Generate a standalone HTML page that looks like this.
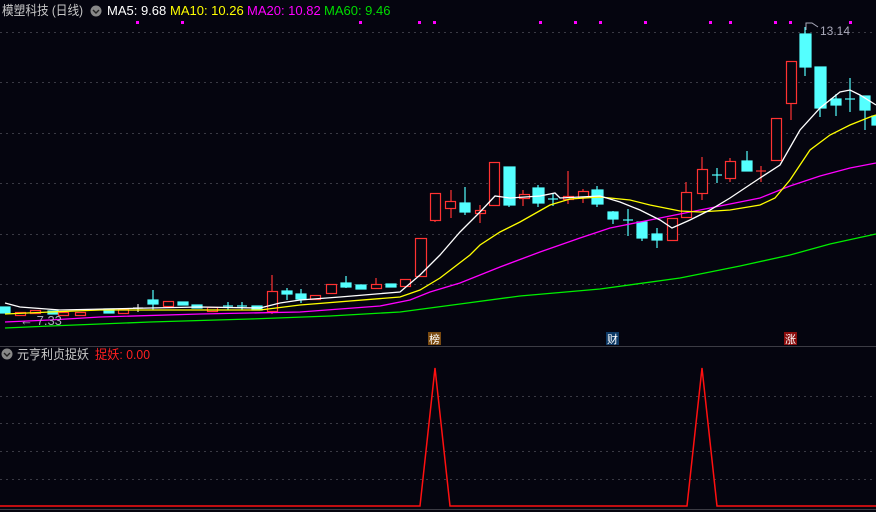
<!DOCTYPE html>
<html><head><meta charset="utf-8"><style>
html,body{margin:0;padding:0;background:#05050f;}
svg{display:block}
text{font-family:"Liberation Sans","Noto Sans CJK SC",sans-serif;}
</style></head><body>
<svg width="876" height="512" viewBox="0 0 876 512" xmlns="http://www.w3.org/2000/svg">
<rect width="876" height="512" fill="#05050f"/>
<g stroke="#3a3a44" stroke-width="1" stroke-dasharray="2,4">
<line x1="0" y1="32.5" x2="876" y2="32.5"/><line x1="0" y1="82.5" x2="876" y2="82.5"/>
<line x1="0" y1="133.5" x2="876" y2="133.5"/><line x1="0" y1="183.5" x2="876" y2="183.5"/>
<line x1="0" y1="234.5" x2="876" y2="234.5"/><line x1="0" y1="284.5" x2="876" y2="284.5"/>
<line x1="0" y1="396.5" x2="876" y2="396.5"/><line x1="0" y1="423.5" x2="876" y2="423.5"/>
<line x1="0" y1="451.5" x2="876" y2="451.5"/><line x1="0" y1="479.5" x2="876" y2="479.5"/>
</g>
<line x1="0" y1="346.5" x2="876" y2="346.5" stroke="#3c3c44"/>
<line x1="0" y1="509.5" x2="876" y2="509.5" stroke="#3c3c44"/>
<g fill="#ff00ff">
<rect x="136" y="21" width="3" height="3"/><rect x="181" y="21" width="3" height="3"/><rect x="359" y="21" width="3" height="3"/>
<rect x="418" y="21" width="3" height="3"/><rect x="433" y="21" width="3" height="3"/><rect x="539" y="21" width="3" height="3"/>
<rect x="574" y="21" width="3" height="3"/><rect x="599" y="21" width="3" height="3"/><rect x="644" y="21" width="3" height="3"/>
<rect x="709" y="21" width="3" height="3"/><rect x="729" y="21" width="3" height="3"/><rect x="774" y="21" width="3" height="3"/>
<rect x="789" y="21" width="3" height="3"/><rect x="849" y="21" width="3" height="3"/>
</g>
<g stroke-width="1.2">
<g fill="#54ffff" stroke="#54ffff">
<rect x="0" y="307" width="10" height="6"/>
<rect x="48" y="311" width="10" height="3"/>
<rect x="104" y="309" width="10" height="4"/>
<line x1="153" y1="290" x2="153" y2="310"/><rect x="148" y="300" width="10" height="4"/>
<rect x="178" y="302" width="10" height="3"/>
<rect x="192" y="305" width="10" height="3"/>
<line x1="228" y1="302" x2="228" y2="310"/><line x1="223" y1="306" x2="233" y2="306"/>
<line x1="242" y1="302" x2="242" y2="310"/><line x1="237" y1="306" x2="247" y2="306"/>
<rect x="252" y="306" width="10" height="4"/>
<line x1="287" y1="288" x2="287" y2="300"/><rect x="282" y="291" width="10" height="3"/>
<line x1="301" y1="289" x2="301" y2="303"/><rect x="296" y="294" width="10" height="5"/>
<line x1="346" y1="276" x2="346" y2="288"/><rect x="341" y="283" width="10" height="4"/>
<rect x="356" y="285" width="10" height="4"/>
<rect x="386" y="284" width="10" height="3"/>
<line x1="465" y1="187" x2="465" y2="215"/><rect x="460" y="203" width="10" height="9"/>
<line x1="509" y1="167" x2="509" y2="207"/><rect x="504" y="167" width="11" height="38"/>
<line x1="538" y1="185" x2="538" y2="207"/><rect x="533" y="188" width="11" height="15"/>
<line x1="553" y1="194" x2="553" y2="206"/><line x1="548" y1="199" x2="558" y2="199"/>
<line x1="597" y1="186" x2="597" y2="207"/><rect x="592" y="190" width="11" height="14"/>
<line x1="613" y1="211" x2="613" y2="224"/><rect x="608" y="212" width="10" height="7"/>
<line x1="628" y1="209" x2="628" y2="236"/><line x1="623" y1="220" x2="633" y2="220"/>
<line x1="642" y1="222" x2="642" y2="241"/><rect x="637" y="222" width="10" height="16"/>
<line x1="657" y1="228" x2="657" y2="248"/><rect x="652" y="234" width="10" height="6"/>
<line x1="717" y1="168" x2="717" y2="183"/><line x1="712" y1="175" x2="722" y2="175"/>
<line x1="747" y1="151" x2="747" y2="171"/><rect x="742" y="161" width="10" height="10"/>
<line x1="805" y1="27" x2="805" y2="76"/><rect x="800" y="34" width="11" height="33"/>
<line x1="820" y1="67" x2="820" y2="117"/><rect x="815" y="67" width="11" height="41"/>
<line x1="836" y1="94" x2="836" y2="116"/><rect x="831" y="99" width="10" height="6"/>
<line x1="850" y1="78" x2="850" y2="112"/><line x1="845" y1="99" x2="855" y2="99"/>
<line x1="865" y1="96" x2="865" y2="130"/><rect x="860" y="96" width="10" height="14"/>
<rect x="872" y="116" width="4" height="9"/>
</g>
<g fill="#05050f" stroke="#ff3232">
<rect x="15.5" y="312.5" width="10" height="3"/>
<rect x="30.5" y="310.5" width="10" height="3"/>
<rect x="58.5" y="312.5" width="10" height="3"/>
<rect x="75.5" y="312.5" width="10" height="3"/>
<rect x="118.5" y="309.5" width="10" height="4"/>
<line x1="138" y1="304" x2="138" y2="312" stroke="#ddd"/><line x1="133" y1="308" x2="143" y2="308" stroke="#ddd"/>
<rect x="163.5" y="301.5" width="10" height="5"/>
<rect x="207.5" y="307.5" width="10" height="4"/>
<line x1="272" y1="275" x2="272" y2="314"/><rect x="267.5" y="291.5" width="10" height="20"/>
<rect x="310.5" y="295.5" width="10" height="4"/>
<rect x="326.5" y="284.5" width="10" height="9"/>
<line x1="376" y1="278" x2="376" y2="289"/><rect x="371.5" y="284.5" width="10" height="4"/>
<rect x="400.5" y="279.5" width="10" height="7"/>
<rect x="415.5" y="238.5" width="11" height="38"/>
<line x1="435" y1="218" x2="435" y2="222"/><rect x="430.5" y="193.5" width="10" height="27"/>
<line x1="451" y1="190" x2="451" y2="218"/><rect x="445.5" y="201.5" width="10" height="7"/>
<line x1="480" y1="205" x2="480" y2="223"/><rect x="475.5" y="210.5" width="10" height="3"/>
<rect x="489.5" y="162.5" width="10" height="43"/>
<line x1="523" y1="190" x2="523" y2="206"/><rect x="519.5" y="194.5" width="10" height="4"/>
<line x1="568" y1="171" x2="568" y2="204"/><rect x="563.5" y="196.5" width="10" height="3"/>
<line x1="583" y1="189" x2="583" y2="203"/><rect x="578.5" y="191.5" width="10" height="6"/>
<rect x="667.5" y="218.5" width="10" height="22"/>
<line x1="686" y1="182" x2="686" y2="218"/><rect x="681.5" y="192.5" width="10" height="25"/>
<line x1="702" y1="157" x2="702" y2="200"/><rect x="697.5" y="169.5" width="10" height="24"/>
<line x1="730" y1="158" x2="730" y2="182"/><rect x="725.5" y="161.5" width="10" height="17"/>
<line x1="761" y1="166" x2="761" y2="182"/><line x1="756" y1="171" x2="766" y2="171"/>
<rect x="771.5" y="118.5" width="10" height="42"/>
<line x1="791" y1="103" x2="791" y2="120"/><rect x="786.5" y="61.5" width="10" height="42"/>
</g>
</g>
<polyline fill="none" stroke="#00ee00" stroke-width="1.3" points="5,328 50,326 150,322 250,319 330,316 400,312 460,304 520,296 600,289 680,278 740,266 790,255 830,244 876,234"/>
<polyline fill="none" stroke="#ff00ff" stroke-width="1.3" points="5,322 50,320 100,317 200,314 300,312 380,306 410,300 430,292 460,283 500,267 540,252 580,238 610,228 640,222 680,214 720,206 760,198 790,186 820,176 850,168 876,163"/>
<polyline fill="none" stroke="#ffff00" stroke-width="1.3" points="5,314 50,312 100,310 200,310 260,310 300,305 400,297 420,290 440,278 470,255 480,245 500,232 520,222 550,205 570,199 600,197 630,200 650,205 680,211 700,212 730,210 760,205 775,198 790,180 810,150 830,135 850,125 870,117 876,115"/>
<polyline fill="none" stroke="#ffffff" stroke-width="1.3" points="5,303 20,307 60,310 150,308 200,307 260,308 280,303 300,300 340,297 400,292 420,275 440,255 460,232 480,212 495,196 510,198 540,196 555,193 560,198 580,197 600,196 620,202 640,210 660,220 672,228 690,220 710,210 730,198 760,178 780,165 800,130 820,108 840,92 850,90 860,95 876,105"/>
<text x="20" y="325" fill="#aab" font-size="13">← 7.33</text>
<path d="M806 30 V23 L812 23 L818 27" fill="none" stroke="#aab" stroke-width="1"/>
<text x="820" y="35" fill="#aab" font-size="12">13.14</text>
<rect x="428" y="332" width="13" height="13" fill="#7a4a10"/><text x="434.5" y="343" fill="#fff" font-size="11" text-anchor="middle">榜</text>
<rect x="606" y="332" width="13" height="13" fill="#0e3a66"/><text x="612.5" y="343" fill="#fff" font-size="11" text-anchor="middle">财</text>
<rect x="784" y="332" width="13" height="13" fill="#8a0d0d"/><text x="790.5" y="343" fill="#fff" font-size="11" text-anchor="middle">涨</text>
<polyline fill="none" stroke="#ff1010" stroke-width="1.5" points="0,506 420,506 435,368 450,506 687,506 702,368 717,506 876,506"/>
<text x="2" y="15" fill="#c8c8c8" font-size="13" textLength="81" lengthAdjust="spacingAndGlyphs">模塑科技 (日线)</text>
<circle cx="96" cy="11" r="5.5" fill="#888"/><path d="M93 10 L96 13 L99 10" stroke="#222" stroke-width="1.4" fill="none"/>
<text x="107" y="15" font-size="13" fill="#ffffff">MA5: 9.68</text>
<text x="170" y="15" font-size="13" fill="#ffff00">MA10: 10.26</text>
<text x="247" y="15" font-size="13" fill="#ff00ff">MA20: 10.82</text>
<text x="324" y="15" font-size="13" fill="#00dd00">MA60: 9.46</text>
<circle cx="7" cy="354" r="5.5" fill="#888"/><path d="M4 353 L7 356 L10 353" stroke="#222" stroke-width="1.4" fill="none"/>
<text x="17" y="359" fill="#c8c8c8" font-size="13" textLength="72" lengthAdjust="spacingAndGlyphs">元亨利贞捉妖</text>
<text x="95" y="359" fill="#ff2020" font-size="13" textLength="55" lengthAdjust="spacingAndGlyphs">捉妖: 0.00</text>
</svg>
</body></html>
